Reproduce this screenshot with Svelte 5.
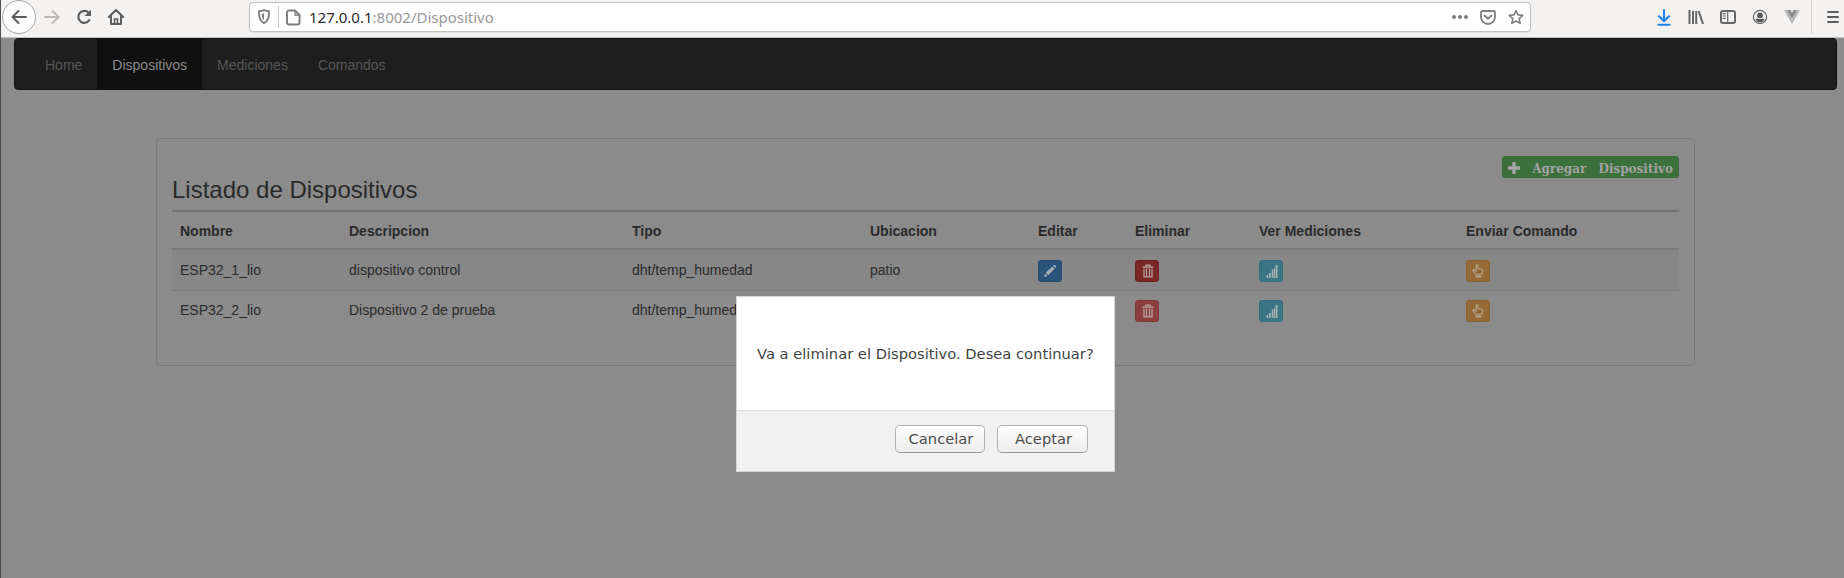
<script>
  const links = ['Home', 'Dispositivos', 'Mediciones', 'Comandos'];
  const headers = ['Nombre', 'Descripcion', 'Tipo', 'Ubicacion', 'Editar', 'Eliminar', 'Ver Mediciones', 'Enviar Comando'];
  const rows = [
    { name: 'ESP32_1_lio', desc: 'dispositivo control', type: 'dht/temp_humedad', place: 'patio', focused: true },
    { name: 'ESP32_2_lio', desc: 'Dispositivo 2 de prueba', type: 'dht/temp_humedad', place: 'patio', focused: false }
  ];
</script>

<div class="window">
  <header class="toolbar">
    <div class="nav-tools">
      <span class="back">
        <svg width="18" height="18" viewBox="0 0 18 18"><path d="M16 9H3M8.500 3 2.500 9l6 6" fill="none" stroke="#5c5c5c" stroke-width="2" stroke-linecap="round" stroke-linejoin="round" /></svg>
      </span>
      <svg class="fwd" width="18" height="18" viewBox="0 0 18 18"><path d="M2 9h13M9.500 3l6 6-6 6" fill="none" stroke="#b9b8b7" stroke-width="2" stroke-linecap="round" stroke-linejoin="round" /></svg>
      <svg class="reload" width="18" height="18" viewBox="0 0 18 18"><path d="M14.300 12.200A6 6 0 1 1 13.600 4.600" fill="none" stroke="#5c5c5c" stroke-width="2.200" stroke-linecap="round" /><path d="M16 1.700V8H9.700Z" fill="#5c5c5c" /></svg>
      <svg class="home" width="18" height="18" viewBox="0 0 18 18"><path d="M1.800 9 9 2l7.200 7M4 8v8h10V8" fill="none" stroke="#5c5c5c" stroke-width="2" stroke-linecap="round" stroke-linejoin="round" /><path d="M7.500 16v-5h3v5" fill="none" stroke="#5c5c5c" stroke-width="1.600" /></svg>
    </div>

    <div class="url">
      <svg class="shield" width="14" height="16" viewBox="0 0 14 16"><path d="M7 1.200c2 .9 3.500 1 5 1 .3 5.500-.6 9.700-5 12-4.400-2.300-5.300-6.500-5-12 1.500 0 3-.1 5-1Z" fill="none" stroke="#808080" stroke-width="1.900" stroke-linejoin="round" /><path d="M7 4.200v7C5.200 9.800 4.700 7.500 4.700 4.800 5.600 4.700 6.300 4.500 7 4.200Z" fill="#808080" /></svg>
      <i class="bar"></i>
      <svg class="doc" width="15" height="17" viewBox="0 0 15 17"><path d="M3 1.500h6L13.500 6v7.500a2 2 0 0 1-2 2H3a2 2 0 0 1-2-2v-10a2 2 0 0 1 2-2Z" fill="none" stroke="#7c7c7c" stroke-width="1.900" /><path d="M9 1.500V6h4.500" fill="none" stroke="#7c7c7c" stroke-width="1.300" /></svg>
      <span class="address"><b>127.0.0.1</b>:8002/Dispositivo</span>
      <svg class="dots" width="18" height="6" viewBox="0 0 18 6"><g fill="#7c7c7c"><circle cx="3" cy="3" r="2" /><circle cx="9" cy="3" r="2" /><circle cx="15" cy="3" r="2" /></g></svg>
      <svg class="pocket" width="16" height="15" viewBox="0 0 16 15"><path d="M2.500 1h11A1.500 1.500 0 0 1 15 2.500V7A7 7 0 0 1 1 7V2.500A1.500 1.500 0 0 1 2.500 1Z" fill="none" stroke="#808080" stroke-width="1.800" /><path d="M4.700 5.700 8 8.900l3.300-3.200" fill="none" stroke="#808080" stroke-width="2" stroke-linecap="round" stroke-linejoin="round" /></svg>
      <svg class="star" width="16" height="16" viewBox="0 0 16 16"><path d="m8 1.500 2 4.300 4.700.600-3.500 3.200.9 4.700L8 12l-4.100 2.300.9-4.700L1.300 6.400 6 5.800Z" fill="none" stroke="#808080" stroke-width="1.700" stroke-linejoin="round" /></svg>
    </div>

    <div class="extras">
      <svg class="download" width="14" height="17" viewBox="0 0 14 17"><path d="M7 1v11M2 7.200l5 5 5-5M1.500 15.800h11" fill="none" stroke="#1e82e6" stroke-width="2" stroke-linecap="round" stroke-linejoin="round" /></svg>
      <svg width="16" height="16" viewBox="0 0 16 16"><path d="M1.500 1v14M5 2v13M8.200 2v13M10.700 2l4.300 13" fill="none" stroke="#666" stroke-width="2" /></svg>
      <svg width="16" height="14" viewBox="0 0 16 14"><rect x="1" y="1" width="14" height="12" rx="2" fill="none" stroke="#666" stroke-width="2" /><path d="M7.700 1v12M2.800 3.700h3M2.800 6h3M2.800 8.300h3" stroke="#666" stroke-width="1.200" /></svg>
      <svg width="16" height="16" viewBox="0 0 16 16"><circle cx="8" cy="8" r="6.600" fill="none" stroke="#666" stroke-width="1.200" /><circle cx="8" cy="6.300" r="2.900" fill="#5c5c5c" /><path d="M3.200 10.800Q5 9.400 6.200 9.400q1.800 1 3.600 0 1.200 0 3 1.400Q11 13.500 8 13.500t-4.800-2.700Z" fill="#5c5c5c" /></svg>
      <svg width="16" height="14" viewBox="0 0 16 14"><path d="M0 0h3.200L8 8.200 12.800 0H16L8 14Z" fill="#b5b5b5" /><path d="M3.200 0h3L8 3l1.800-3h3L8 8.200Z" fill="#858585" /></svg>
    </div>
    <i class="split"></i>
    <svg class="menu" width="12" height="12" viewBox="0 0 12 12"><path d="M1 1h10M1 6h10M1 11h10" stroke="#5c5c5c" stroke-width="1.900" stroke-linecap="round" /></svg>
  </header>

  <main>
    <nav>
      {#each links as link}
        <a class:active={link === 'Dispositivos'}>{link}</a>
      {/each}
    </nav>

    <section class="panel">
      <div class="head">
        <h3>Listado de Dispositivos</h3>
        <button class="add">
          <svg width="12" height="12" viewBox="0 0 12 12"><path d="M4.300 0h3.400v4.300H12v3.400H7.700V12H4.300V7.700H0V4.300h4.300Z" fill="#a3a3a3" /></svg>
          <span>Agregar</span><span>Dispositivo</span>
        </button>
      </div>
      <div class="row titles">
        {#each headers as h}<span>{h}</span>{/each}
      </div>
      {#each rows as r, i}
        <div class="row" class:odd={i === 0}>
          <span>{r.name}</span>
          <span>{r.desc}</span>
          <span>{r.type}</span>
          <span>{r.place}</span>
          <span><button class="act edit"><svg width="14" height="14" viewBox="0 0 14 14"><path d="m1 13 1-3.500L4.500 12ZM2.800 8.800l6.400-6.400 2.400 2.400-6.400 6.400ZM10 1.700l.7-.7q.5-.4 1 0l1.300 1.300q.4.500 0 1l-.7.700Z" fill="#a3adb5" /></svg></button></span>
          <span><button class="act del" class:focused={r.focused}><svg width="12" height="14" viewBox="0 0 12 14"><path d="M.5 3.100h11M4 3V1.200h4V3M2 4.500v8.300h8V4.500M4.500 4.500v8M7.500 4.500v8" fill="none" stroke="#b9a3a3" stroke-width="1.200" /></svg></button></span>
          <span><button class="act stats"><svg width="12" height="13" viewBox="0 0 12 13"><path d="M.5 10h1.700v3H.5ZM3 8h1.800v5H3ZM5.800 4.500h1.700V13H5.800ZM9.500 0h2v13h-2ZM8 3.500h1V13H8Z" fill="#9fb1b5" /></svg></button></span>
          <span><button class="act send"><svg width="12" height="14" viewBox="0 0 12 14"><path d="M4.200 7.500V1.800q0-1.100.9-1.100t.9 1.100v2.700l4 .8q1 .3 1 1.400l-1.200 3.500H3.500L.8 6.600q0-1.200 1.300-1l2.100 1.600" fill="none" stroke="#b9a78a" stroke-width="1.100" /><path d="M3.500 11.500h6v2h-6Z" fill="#b9a78a" /></svg></button></span>
        </div>
      {/each}
    </section>
  </main>

  <div class="dialog">
    <p>Va a eliminar el Dispositivo. Desea continuar?</p>
    <footer>
      <button>Cancelar</button>
      <button>Aceptar</button>
    </footer>
  </div>
</div>

<style>
  :global(body) { margin: 0; overflow: hidden; }
  * { box-sizing: border-box; }
  svg { display: block; flex: none; }
  button { margin: 0; font: inherit; }
  .window {
    position: relative;
    width: 1844px;
    height: 578px;
    background: #8b8b8b;
    border-left: 1px solid #4b4d51;
    font: 14px/20px "Liberation Sans", Arial, sans-serif;
    color: #2a2a2a;
  }
  .toolbar {
    height: 38px;
    display: flex;
    align-items: flex-start;
    background: #f3f2f1;
    border-bottom: 1px solid #c6c5c4;
  }
  .nav-tools { display: flex; width: 248px; padding-left: 1px; }
  .back {
    width: 34px;
    height: 34px;
    display: grid;
    place-items: center;
    border: 1px solid #aaa9a8;
    border-radius: 50%;
    background: #fbfbfb;
  }
  .fwd { margin: 8px 0 0 7px; }
  .reload { margin: 8px 0 0 14px; }
  .home { margin: 8px 0 0 14px; }
  .url {
    width: 1282px;
    height: 30px;
    margin-top: 2px;
    display: flex;
    align-items: center;
    background: #fff;
    border: 1px solid #c3c2c1;
    border-radius: 4px;
    box-shadow: 0 1px 2px rgba(0, 0, 0, .08);
  }
  .shield { margin-left: 7px; }
  .bar { width: 1px; height: 22px; margin: 0 7px; background: #c8c8c8; }
  .address {
    margin-left: 8px;
    font: 15px/20px "Noto Sans", sans-serif;
    color: #999;
    white-space: nowrap;
  }
  .address b { font-weight: 400; color: #2b2b2b; }
  .dots { margin-left: auto; }
  .pocket { margin-left: 11px; }
  .star { margin: 0 6px 0 12px; }
  .extras { display: flex; align-items: center; height: 34px; margin-left: 126px; gap: 16px; }
  .download { margin-right: 1px; }
  .split { width: 1px; height: 34px; margin-left: 11px; background: #d2d1d0; }
  .menu { margin: 11px 0 0 15px; }
  nav {
    display: flex;
    height: 52px;
    margin: 0 7px 0 13px;
    padding-left: 15px;
    background: #1e1e1e;
    border: 1px solid #101010;
    border-radius: 4px;
  }
  nav a { padding: 16px 15px 14px; color: #565656; }
  nav a.active { background: #101010; color: #8b8b8b; }
  .panel {
    width: 1539px;
    height: 228px;
    margin: 48px 0 0 155px;
    padding: 0 15px;
    border: 1px solid #797979;
    border-radius: 4px;
  }
  .head { display: flex; justify-content: space-between; height: 71px; }
  h3 { margin: 38px 0 0; font-size: 24px; font-weight: 400; line-height: 26px; }
  .add {
    display: flex;
    align-items: center;
    justify-content: space-between;
    width: 177px;
    height: 22px;
    margin-top: 17px;
    padding: 2px 5px 0;
    border: 1px solid #37703a;
    border-radius: 3px;
    background: #3c703c;
    color: #a3a3a3;
    font: bold 12px/18px "DejaVu Serif", serif;
  }
  .add span { padding-top: 1px; }
  .row {
    display: grid;
    grid-template-columns: 169px 283px 238px 168px 97px 124px 207px 221px;
    height: 40px;
    padding-top: 9px;
    border-top: 1px solid #797979;
  }
  .row span { padding-left: 8px; }
  .titles {
    height: 40px;
    padding-top: 9px;
    border-top: 2px solid #747474;
    border-bottom: 2px solid #797979;
    font-weight: 700;
  }
  .odd { background: #878787; border-top: 0; padding-top: 10px; }
  .act {
    display: grid;
    place-items: center;
    width: 24px;
    height: 22px;
    padding: 0;
    border: 1px solid;
    border-radius: 3px;
  }
  .edit { background: #2a5379; border-color: #264b70; }
  .del { background: #8c403e; border-color: #803734; padding-left: 1px; }
  .del.focused { background: #7a2826; border-color: #6b201f; }
  .stats { background: #3b7584; border-color: #34707f; padding-left: 2px; }
  .send { background: #936936; border-color: #8e612c; }
  .dialog {
    position: absolute;
    left: 735px;
    top: 296px;
    width: 379px;
    height: 176px;
    border: 1px solid #d4d4d4;
    background: #fff;
    color: #444;
    font: 14.700px/20px "DejaVu Sans", sans-serif;
  }
  .dialog p { height: 113px; margin: 0; padding: 47px 0 0 20px; white-space: nowrap; }
  footer {
    display: flex;
    justify-content: flex-end;
    gap: 12px;
    height: 61px;
    padding: 14px 26px 0 0;
    background: #f1f1f1;
    border-top: 1px solid #e0e0e0;
  }
  footer button {
    width: 91px;
    height: 28px;
    padding: 0 0 1px 2px;
    border: 1px solid #b2b2b2;
    border-bottom-color: #999;
    border-radius: 5px;
    background: linear-gradient(#fff, #ececec);
    color: #4c4c4c;
  }
  footer button:first-child { width: 90px; }
</style>
